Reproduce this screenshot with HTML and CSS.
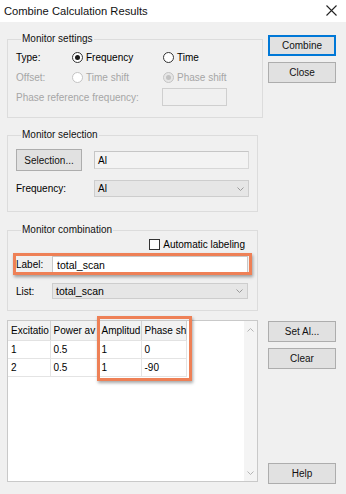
FILE: index.html
```html
<!DOCTYPE html>
<html lang="en">
<head>
    <meta charset="UTF-8">
    <meta name="viewport" content="width=device-width, initial-scale=1.0">
    <title>Combine Calculation Results</title>

    <link rel="stylesheet" href="styles.css">
</head>
<body>

    <!-- Заголовок окна -->
    <div class="Titlebar">
        <span class="Titlebar__text">Combine Calculation Results</span>
        <svg class="Titlebar__close" width="11" height="11" viewBox="0 0 11 11">
            <path d="M0.5 0.5 L10.5 10.5 M10.5 0.5 L0.5 10.5" stroke="#222" stroke-width="1.1" fill="none"/>
        </svg>
    </div>

    <div class="Dialog">
        <div class="Dialog__top">
            <div class="Groups">

                <fieldset class="Group Group--settings">
                    <legend>Monitor settings</legend>
                    <div class="Row">
                        <span class="Row__label">Type:</span>
                        <label class="Option"><span class="Radio Radio--checked"></span>Frequency</label>
                        <label class="Option"><span class="Radio"></span>Time</label>
                    </div>
                    <div class="Row Row--disabled">
                        <span class="Row__label">Offset:</span>
                        <label class="Option"><span class="Radio Radio--disabled"></span>Time shift</label>
                        <label class="Option"><span class="Radio Radio--disabled Radio--checked"></span>Phase shift</label>
                    </div>
                    <div class="Row Row--disabled">
                        <span class="Row__label Row__label--long">Phase reference frequency:</span>
                        <span class="Field Field--disabled Field--phase"></span>
                    </div>
                </fieldset>

                <fieldset class="Group Group--selection">
                    <legend>Monitor selection</legend>
                    <div class="Row Row--sel">
                        <button class="Btn Btn--sel">Selection...</button>
                        <span class="Field Field--readonly">Al</span>
                    </div>
                    <div class="Row Row--freq">
                        <span class="Row__label Row__label--freq">Frequency:</span>
                        <span class="Select Select--wide">Al
                            <svg class="Select__arrow" width="7" height="4" viewBox="0 0 7 4"><path d="M0.5 0.5 L3.5 3.5 L6.5 0.5" stroke="#9a9a9a" fill="none"/></svg>
                        </span>
                    </div>
                </fieldset>

                <fieldset class="Group Group--combination">
                    <legend>Monitor combination</legend>
                    <div class="Row Row--check">
                        <span class="Check"></span>Automatic labeling
                    </div>
                    <div class="Row Row--label Mark">
                        <span class="Row__label Row__label--short">Label:</span>
                        <span class="Field Field--input">total_scan</span>
                    </div>
                    <div class="Row Row--list">
                        <span class="Row__label Row__label--short">List:</span>
                        <span class="Select Select--list">total_scan
                            <svg class="Select__arrow" width="7" height="4" viewBox="0 0 7 4"><path d="M0.5 0.5 L3.5 3.5 L6.5 0.5" stroke="#9a9a9a" fill="none"/></svg>
                        </span>
                    </div>
                </fieldset>
            </div>

            <div class="Side">
                <button class="Btn Btn--side Btn--default">Combine</button>
                <button class="Btn Btn--side">Close</button>
            </div>
        </div>

        <div class="Dialog__bottom">
            <div class="Grid">
                <table class="Grid__table">
                    <colgroup>
                        <col style="width: 42px">
                        <col style="width: 48px">
                        <col style="width: 43px">
                        <col style="width: 45px">
                    </colgroup>
                    <thead>
                        <tr><th>Excitatio</th><th>Power av</th><th>Amplitud</th><th>Phase sh</th></tr>
                    </thead>
                    <tbody>
                        <tr><td>1</td><td>0.5</td><td>1</td><td>0</td></tr>
                        <tr><td>2</td><td>0.5</td><td>1</td><td>-90</td></tr>
                    </tbody>
                </table>

                <div class="Grid__scroll">
                    <svg width="7" height="4" viewBox="0 0 7 4"><path d="M0.5 3.5 L3.5 0.5 L6.5 3.5" stroke="#b5b5b5" fill="none"/></svg>
                    <svg width="7" height="4" viewBox="0 0 7 4"><path d="M0.5 0.5 L3.5 3.5 L6.5 0.5" stroke="#b5b5b5" fill="none"/></svg>
                </div>

                <!-- выделение колонок -->
                <div class="Grid__mark"></div>
            </div>

            <div class="Side Side--bottom">
                <button class="Btn Btn--side">Set Al...</button>
                <button class="Btn Btn--side">Clear</button>
                <button class="Btn Btn--side Btn--help">Help</button>
            </div>
        </div>
    </div>
</body>
</html>
```

FILE: styles.css
```css
* {
    box-sizing: border-box;
}

body {
    margin: 0;
    width: 346px;
    height: 494px;
    background: #f0f0f0;
    font-family: 'Liberation Sans', Arial, sans-serif;
    font-size: 10px;
    color: #000;
    overflow: hidden;
}

/* заголовок */
.Titlebar {
    height: 22px;
    background: #fff;
    display: flex;
    align-items: center;
    justify-content: space-between;
    padding: 0 9px 1px 4px;
}

.Titlebar__text {
    font-size: 11.2px;
    color: #111;
}

.Dialog {
    padding: 10px 10px 0 7px;
}

.Dialog__top,
.Dialog__bottom {
    display: flex;
    gap: 10px;
}

.Groups {
    width: 251px;
}

.Group {
    margin: 0;
    border: 1px solid #dcdcdc;
    padding: 0 8px;
}

.Group legend {
    padding: 0 1px;
    margin-left: 5px;
    line-height: 14px;
    color: #111;
}

.Group--settings {
    padding-top: 1px;
    padding-bottom: 10px;
}

.Group--selection {
    margin-top: 10px;
    padding-bottom: 14px;
}

.Group--combination {
    margin-top: 11px;
    padding-bottom: 11px;
}

.Row {
    display: flex;
    align-items: center;
    height: 20px;
}

.Row--disabled {
    color: #a6a6a6;
}

.Row__label {
    width: 56px;
}

.Row__label--long {
    width: 146px;
}

.Row__label--freq {
    width: 78px;
}

.Row__label--short {
    width: 36px;
}

.Option {
    display: flex;
    align-items: center;
    width: 91px;
}

.Radio {
    width: 11px;
    height: 11px;
    border: 1px solid #333;
    border-radius: 50%;
    background: #fff;
    margin-right: 3px;
    position: relative;
}

.Radio--checked::after {
    content: '';
    position: absolute;
    inset: 2px;
    border-radius: 50%;
    background: #1a1a1a;
}

.Radio--disabled {
    border-color: #c4c4c4;
}

.Radio--disabled.Radio--checked {
    background: #e6e6e6;
}

.Radio--disabled.Radio--checked::after {
    background: #c2c2c2;
}

.Field {
    display: flex;
    align-items: center;
    height: 18px;
    padding: 0 3px;
}

.Field--disabled {
    border: 1px solid #cfcfcf;
    background: #f0f0f0;
}

.Field--phase {
    width: 65px;
}

.Field--readonly {
    width: 155px;
    margin-left: 12px;
    border: 1px solid #d7d7d7;
    border-top-color: #c6c6c6;
    border-left-color: #c6c6c6;
    background: #f3f3f3;
}

.Field--input {
    width: 196px;
    height: 17px;
    background: #fff;
    border: 1px solid #c8c8c8;
    padding-left: 4px;
    font-size: 10.5px;
}

.Select {
    display: flex;
    align-items: center;
    justify-content: space-between;
    border: 1px solid #cdcdcd;
    background: #e6e6e6;
    padding: 0 4px 0 3px;
}

.Select--wide {
    width: 155px;
    height: 17px;
}

.Select--list {
    width: 196px;
    height: 16px;
    font-size: 10.5px;
}

.Row--sel {
    margin-top: 7px;
    height: 22px;
}

.Row--freq {
    margin-top: 9px;
    height: 17px;
}

.Row--check {
    margin-top: 1px;
    height: 12px;
    justify-content: flex-end;
    padding-right: 4px;
}

.Check {
    width: 11px;
    height: 11px;
    border: 1px solid #333;
    background: #fff;
    margin-right: 3px;
}

.Row--label {
    margin-top: 6px;
    height: 17px;
    position: relative;
}

.Row--list {
    margin-top: 10px;
    height: 16px;
}

/* оранжевые рамки-пометки */
.Mark::after,
.Grid__mark {
    content: '';
    position: absolute;
    border: 3px solid #ee8056;
    box-shadow: 1px 2px 3px rgba(0, 0, 0, .35);
    pointer-events: none;
}

.Mark::after {
    inset: -3px -3px -2px -3px;
}

/* кнопки */
.Btn {
    font-family: inherit;
    font-size: 10px;
    color: #111;
    background: #e1e1e1;
    border: 1px solid #adadad;
    padding: 0;
    outline: none;
}

.Btn--sel {
    width: 66px;
    height: 22px;
}

.Side {
    width: 68px;
    margin-top: 3px;
    display: flex;
    flex-direction: column;
    gap: 6px;
}

.Btn--side {
    height: 21px;
}

.Btn--default {
    border-color: #0078d7;
    box-shadow: inset 0 0 0 1px #0078d7;
}

.Dialog__bottom {
    margin-top: 9px;
}

.Side--bottom {
    margin-top: 1px;
    height: 163px;
}

.Btn--help {
    margin-top: auto;
}

/* таблица */
.Grid {
    width: 251px;
    height: 162px;
    border: 1px solid #c9c9c9;
    background: #fff;
    position: relative;
    display: flex;
}

.Grid__table {
    width: 178px;
    height: max-content;
    table-layout: fixed;
    border-collapse: collapse;
}

.Grid__table th,
.Grid__table td {
    white-space: nowrap;
    text-align: left;
    font-weight: normal;
    padding: 0 2px 0 3px;
}

.Grid__table th {
    height: 19px;
    background: #f2f2f2;
    border-right: 1px solid #d2d2d2;
    border-bottom: 1px solid #e2e2e2;
}

.Grid__table td {
    height: 18px;
    border: 1px solid #e4e4e4;
    border-top: none;
    border-left: none;
}

.Grid__scroll {
    margin-left: auto;
    width: 13px;
    background: #f4f4f4;
    display: flex;
    flex-direction: column;
    align-items: center;
    justify-content: space-between;
    padding: 7px 0 6px;
}

.Grid__mark {
    left: 89px;
    top: -5px;
    width: 95px;
    height: 65px;
}
```
